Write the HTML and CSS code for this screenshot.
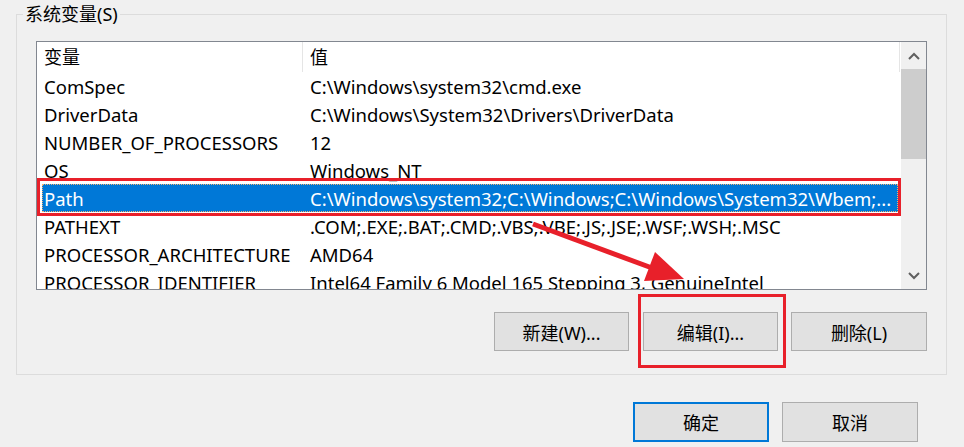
FILE: index.html
```html
<!DOCTYPE html>
<html lang="zh-CN">
<head>
<meta charset="utf-8">
<title>系统变量</title>
<link rel="stylesheet" href="styles.css">
</head>
<body>
<fieldset class="group">
  <legend class="group-title">系统变量(S)</legend>
  <div class="list">
    <div class="list-main">
      <div class="header">
        <div class="hcell c1">变量</div>
        <div class="hcell c2">值</div>
      </div>
      <div class="row"><span class="c1">ComSpec</span><span class="c2">C:\Windows\system32\cmd.exe</span></div>
      <div class="row"><span class="c1">DriverData</span><span class="c2">C:\Windows\System32\Drivers\DriverData</span></div>
      <div class="row"><span class="c1">NUMBER_OF_PROCESSORS</span><span class="c2">12</span></div>
      <div class="row"><span class="c1">OS</span><span class="c2">Windows_NT</span></div>
      <div class="row selected"><span class="c1">Path</span><span class="c2">C:\Windows\system32;C:\Windows;C:\Windows\System32\Wbem;...</span><div class="mark mark-row"></div></div>
      <div class="row"><span class="c1">PATHEXT</span><span class="c2">.COM;.EXE;.BAT;.CMD;.VBS;.VBE;.JS;.JSE;.WSF;.WSH;.MSC</span></div>
      <div class="row"><span class="c1">PROCESSOR_ARCHITECTURE</span><span class="c2">AMD64</span></div>
      <div class="row"><span class="c1">PROCESSOR_IDENTIFIER</span><span class="c2">Intel64 Family 6 Model 165 Stepping 3, GenuineIntel</span></div>
    </div>
    <div class="scrollbar">
      <div class="sb-btn"><svg width="12" height="8" viewBox="0 0 12 8"><polyline points="1,7 6,2 11,7" fill="none" stroke="#606060" stroke-width="2"/></svg></div>
      <div class="sb-thumb"></div>
      <div class="sb-track"></div>
      <div class="sb-btn"><svg width="12" height="8" viewBox="0 0 12 8"><polyline points="1,1 6,6 11,1" fill="none" stroke="#606060" stroke-width="2"/></svg></div>
    </div>
  </div>
  <div class="actions">
    <button class="btn">新建(W)...</button>
    <div class="marked">
      <button class="btn">编辑(I)...</button>
      <div class="mark mark-btn"></div>
    </div>
    <button class="btn btn-last">删除(L)</button>
  </div>
</fieldset>
<div class="footer">
  <button class="btn btn-wide btn-primary">确定</button>
  <button class="btn btn-wide">取消</button>
</div>
<svg class="arrow" width="964" height="447" viewBox="0 0 964 447">
  <line x1="533" y1="224" x2="652" y2="268" stroke="#e8202a" stroke-width="5"/>
  <polygon points="684,279 644,281 655,252" fill="#e8202a"/>
</svg>
</body>
</html>
```

FILE: styles.css
```css
html, body {
  margin: 0;
  padding: 0;
}
body {
  width: 964px;
  height: 447px;
  overflow: hidden;
  background: #f0f0f0;
  position: relative;
  font-family: "Noto Sans", "Noto Sans CJK SC", sans-serif;
  font-size: 18px;
  color: #000;
}
.group {
  box-sizing: border-box;
  width: 931px;
  margin: 3px 0 0 16px;
  padding: 0 19px 23px 19px;
  border: 1px solid #dcdcdc;
  min-inline-size: 0;
}
.group-title {
  margin-left: -13px;
  padding: 0 2px;
  line-height: 22px;
}
.list {
  box-sizing: border-box;
  width: 891px;
  height: 249px;
  margin-top: 16px;
  border: 1px solid #828790;
  background: #fff;
  display: grid;
  grid-template-columns: 1fr 25px;
  overflow: hidden;
}
.list-main {
  overflow: hidden;
  white-space: nowrap;
}
.header {
  display: grid;
  grid-template-columns: 266px 1fr;
  height: 30px;
  line-height: 30px;
}
.hcell.c1 {
  padding-left: 7px;
  border-right: 1px solid #e5e5e5;
}
.hcell.c2 {
  padding-left: 7px;
  border-right: 1px solid #e5e5e5;
  margin-right: 1px;
}
.row {
  position: relative;
  display: grid;
  grid-template-columns: 261px 1fr;
  height: 28px;
  line-height: 29px;
  font-size: 18.5px;
  margin: 0 3px 0 5px;
}
.row .c1 {
  padding-left: 2px;
}
.row .c2 {
  padding-left: 7px;
  overflow: hidden;
}
.row.selected {
  background: #0078d7;
  color: #fff;
  outline: 1px dotted #f3b272;
  outline-offset: -1px;
}
.mark {
  position: absolute;
  border: 3px solid #e8202a;
  pointer-events: none;
}
.mark-row {
  left: -5px;
  top: -6px;
  right: -3px;
  bottom: -4px;
}
.scrollbar {
  background: #f0f0f0;
  display: flex;
  flex-direction: column;
}
.sb-btn {
  height: 27px;
  display: flex;
  align-items: center;
  justify-content: center;
}
.sb-thumb {
  height: 90px;
  background: #cdcdcd;
}
.sb-track {
  flex: 1;
}
.actions {
  display: flex;
  justify-content: flex-end;
  gap: 14px;
  margin-top: 22px;
}
.marked {
  position: relative;
  display: flex;
}
.mark-btn {
  left: -5px;
  right: -8px;
  top: -18px;
  bottom: -17px;
}
.btn {
  box-sizing: border-box;
  width: 135px;
  height: 39px;
  padding: 0;
  background: #e1e1e1;
  border: 1px solid #adadad;
  border-radius: 0;
  font-family: "Noto Sans", "Noto Sans CJK SC", sans-serif;
  font-size: 18px;
  color: #000;
}
.btn-last {
  width: 136px;
  margin-left: -1px;
}
.btn-wide {
  width: 136px;
  height: 40px;
}
.btn-primary {
  border: 2px solid #0078d7;
}
.footer {
  display: flex;
  justify-content: flex-end;
  gap: 13px;
  margin-top: 27px;
  padding-right: 46px;
}
.arrow {
  position: absolute;
  left: 0;
  top: 0;
  pointer-events: none;
}
```
